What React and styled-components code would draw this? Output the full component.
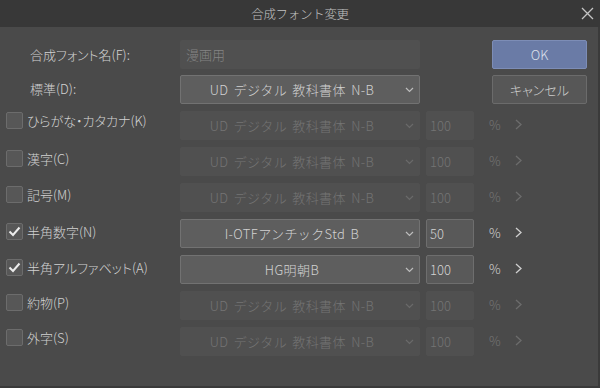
import React from "react";
import styled, {createGlobalStyle} from "styled-components";

const Color = {
  TITLE: `#383838`,
  BODY: `#4a4a4a`,
  EDGE: `#3a3a3a`,
  FIELD: `#5e5e5e`,
  FIELD_BORDER: `#727272`,
  FIELD_OFF: `#505050`,
  TEXT: `#d2d2d2`,
  TEXT_OFF: `#747474`,
  PRIMARY: `#6a7ba6`,
  PRIMARY_BORDER: `#7d8db6`,
};

const GlobalStyle = createGlobalStyle`
  html, body {
    margin: 0;
    padding: 0;
    background: ${Color.BODY};
  }

  body {
    font-family: "Noto Sans CJK JP", "Noto Sans", sans-serif;
    font-size: 13px;
    font-weight: 300;
    color: ${Color.TEXT};
  }
`;

const Window = styled.div`
  display: flex;
  flex-direction: column;
  width: 600px;
  height: 388px;
  overflow: hidden;
`;

const TitleBar = styled.div`
  position: relative;
  display: flex;
  align-items: center;
  justify-content: center;
  height: 27px;
  flex-shrink: 0;
  background: ${Color.TITLE};
`;

const Title = styled.span`
  font-size: 12.5px;
  color: #c2c2c2;
  letter-spacing: -0.3px;
`;

const CloseButton = styled.span`
  position: absolute;
  top: 7px;
  right: 6px;
  display: flex;
  width: 13px;
  height: 13px;
`;

const Body = styled.div`
  display: flex;
  flex-direction: column;
  flex: 1;
  padding-top: 13px;
  border-right: 2px solid ${Color.EDGE};
  border-bottom: 2px solid ${Color.EDGE};
`;

const TopRow = styled.div`
  display: grid;
  grid-template-columns: 180px 240px 95px;
  height: 29px;
  margin-bottom: ${({$last}) => ($last ? `7px` : `6px`)};

  & > *:nth-child(3) {
    margin-left: 72px;
  }
`;

const FieldLabel = styled.span`
  display: flex;
  align-items: center;
  padding-left: 30px;
  padding-bottom: ${({$lift}) => ($lift ? `2px` : `0`)};
  font-feature-settings: "palt";
`;

const NameInput = styled.div`
  display: flex;
  align-items: center;
  padding-left: 6px;
  color: #858585;
  background: ${Color.FIELD_OFF};
  border-radius: 2px;
`;

const ActionButton = styled.div`
  display: flex;
  align-items: center;
  justify-content: center;
  box-sizing: border-box;
  width: 95px;
  color: ${({$primary}) => ($primary ? `#dde1ec` : `#cecece`)};
  background: ${({$primary}) => ($primary ? Color.PRIMARY : `#575757`)};
  border: 1px solid ${({$primary}) => ($primary ? Color.PRIMARY_BORDER : `#6b6b6b`)};
  border-radius: 2px;
  font-feature-settings: "palt";
`;

const Select = styled.div`
  position: relative;
  display: flex;
  align-items: center;
  justify-content: center;
  box-sizing: border-box;
  padding-right: 16px;
  color: ${({$on}) => ($on ? Color.TEXT : Color.TEXT_OFF)};
  background: ${({$on}) => ($on ? Color.FIELD : Color.FIELD_OFF)};
  border: 1px solid ${({$on}) => ($on ? Color.FIELD_BORDER : Color.FIELD_OFF)};
  border-radius: 2px;
  white-space: nowrap;
  letter-spacing: 0.4px;
  word-spacing: 2px;

  & svg {
    position: absolute;
    right: 5px;
    top: 11px;
  }
`;

const FontList = styled.div`
  display: flex;
  flex-direction: column;
  gap: 7px;
`;

const FontRow = styled.div`
  display: grid;
  grid-template-columns: 180px 240px 54px 70px;
  height: 29px;

  & > *:nth-child(3) {
    margin-left: 6px;
  }
`;

const CheckLabel = styled.label`
  display: flex;
  align-items: flex-start;
  gap: 4px;
  padding-left: 6px;
  padding-top: ${({$offset}) => $offset}px;
  white-space: nowrap;
  line-height: 17px;
  font-feature-settings: "palt";
`;

const Box = styled.span`
  display: flex;
  align-items: center;
  justify-content: center;
  box-sizing: border-box;
  width: 17px;
  height: 17px;
  flex-shrink: 0;
  background: #575757;
  border: 1px solid #6c6c6c;
  border-radius: 2px;
`;

const NumberInput = styled.div`
  display: flex;
  align-items: center;
  box-sizing: border-box;
  padding-left: 3px;
  padding-bottom: 1px;
  color: ${({$on}) => ($on ? Color.TEXT : Color.TEXT_OFF)};
  background: ${({$on}) => ($on ? `#595959` : Color.FIELD_OFF)};
  border: 1px solid ${({$on}) => ($on ? `#6e6e6e` : Color.FIELD_OFF)};
  border-radius: 2px;
`;

const Unit = styled.div`
  display: flex;
  align-items: center;
  gap: 14px;
  padding-left: 15px;
  padding-bottom: 2px;
  color: ${({$on}) => ($on ? Color.TEXT : Color.TEXT_OFF)};
`;

const Chevron = ({color}) => (
  <svg width="9" height="6" viewBox="0 0 9 6">
    <path d="M1 1 L4.5 4.5 L8 1" fill="none" stroke={color} strokeWidth="1.2"/>
  </svg>
);

const Arrow = ({color}) => (
  <svg width="7" height="11" viewBox="0 0 7 11">
    <path d="M1 1 L6 5.5 L1 10" fill="none" stroke={color} strokeWidth="1.3"/>
  </svg>
);

const Check = () => (
  <svg width="13" height="11" viewBox="0 0 13 11">
    <path d="M1.5 5.5 L5 9 L11.5 1.5" fill="none" stroke="#ececec" strokeWidth="2"/>
  </svg>
);

const DEFAULT_FONT = `UD デジタル 教科書体 N-B`;

const fontRows = [
  {label: `ひらがな・カタカナ(K)`, font: DEFAULT_FONT, size: `100`, on: false, offset: 1},
  {label: `漢字(C)`, font: DEFAULT_FONT, size: `100`, on: false, offset: 3},
  {label: `記号(M)`, font: DEFAULT_FONT, size: `100`, on: false, offset: 3},
  {label: `半角数字(N)`, font: `I-OTFアンチックStd B`, size: `50`, on: true, offset: 4},
  {label: `半角アルファベット(A)`, font: `HG明朝B`, size: `100`, on: true, offset: 4},
  {label: `約物(P)`, font: DEFAULT_FONT, size: `100`, on: false, offset: 3},
  {label: `外字(S)`, font: DEFAULT_FONT, size: `100`, on: false, offset: 2},
];

const App = () => {
  return (
    <>
      <GlobalStyle/>
      <Window>
        <TitleBar>
          <Title>合成フォント変更</Title>
          <CloseButton>
            <svg width="13" height="13" viewBox="0 0 13 13">
              <path d="M1 1 L12 12 M12 1 L1 12" stroke="#c4c4c4" strokeWidth="1.3"/>
            </svg>
          </CloseButton>
        </TitleBar>
        <Body>
          <TopRow>
            <FieldLabel>合成フォント名(F):</FieldLabel>
            <NameInput>漫画用</NameInput>
            <ActionButton $primary>OK</ActionButton>
          </TopRow>
          <TopRow $last>
            <FieldLabel $lift>標準(D):</FieldLabel>
            <Select $on>
              {DEFAULT_FONT}
              <Chevron color="#bdbdbd"/>
            </Select>
            <ActionButton>キャンセル</ActionButton>
          </TopRow>
          <FontList>
            {fontRows.map((row) => (
              <FontRow key={row.label}>
                <CheckLabel $offset={row.offset}>
                  <Box>{row.on && <Check/>}</Box>
                  {row.label}
                </CheckLabel>
                <Select $on={row.on}>
                  {row.font}
                  <Chevron color={row.on ? `#bdbdbd` : `#6a6a6a`}/>
                </Select>
                <NumberInput $on={row.on}>{row.size}</NumberInput>
                <Unit $on={row.on}>
                  %
                  <Arrow color={row.on ? `#cfcfcf` : `#6c6c6c`}/>
                </Unit>
              </FontRow>
            ))}
          </FontList>
        </Body>
      </Window>
    </>
  );
};

export default App;
